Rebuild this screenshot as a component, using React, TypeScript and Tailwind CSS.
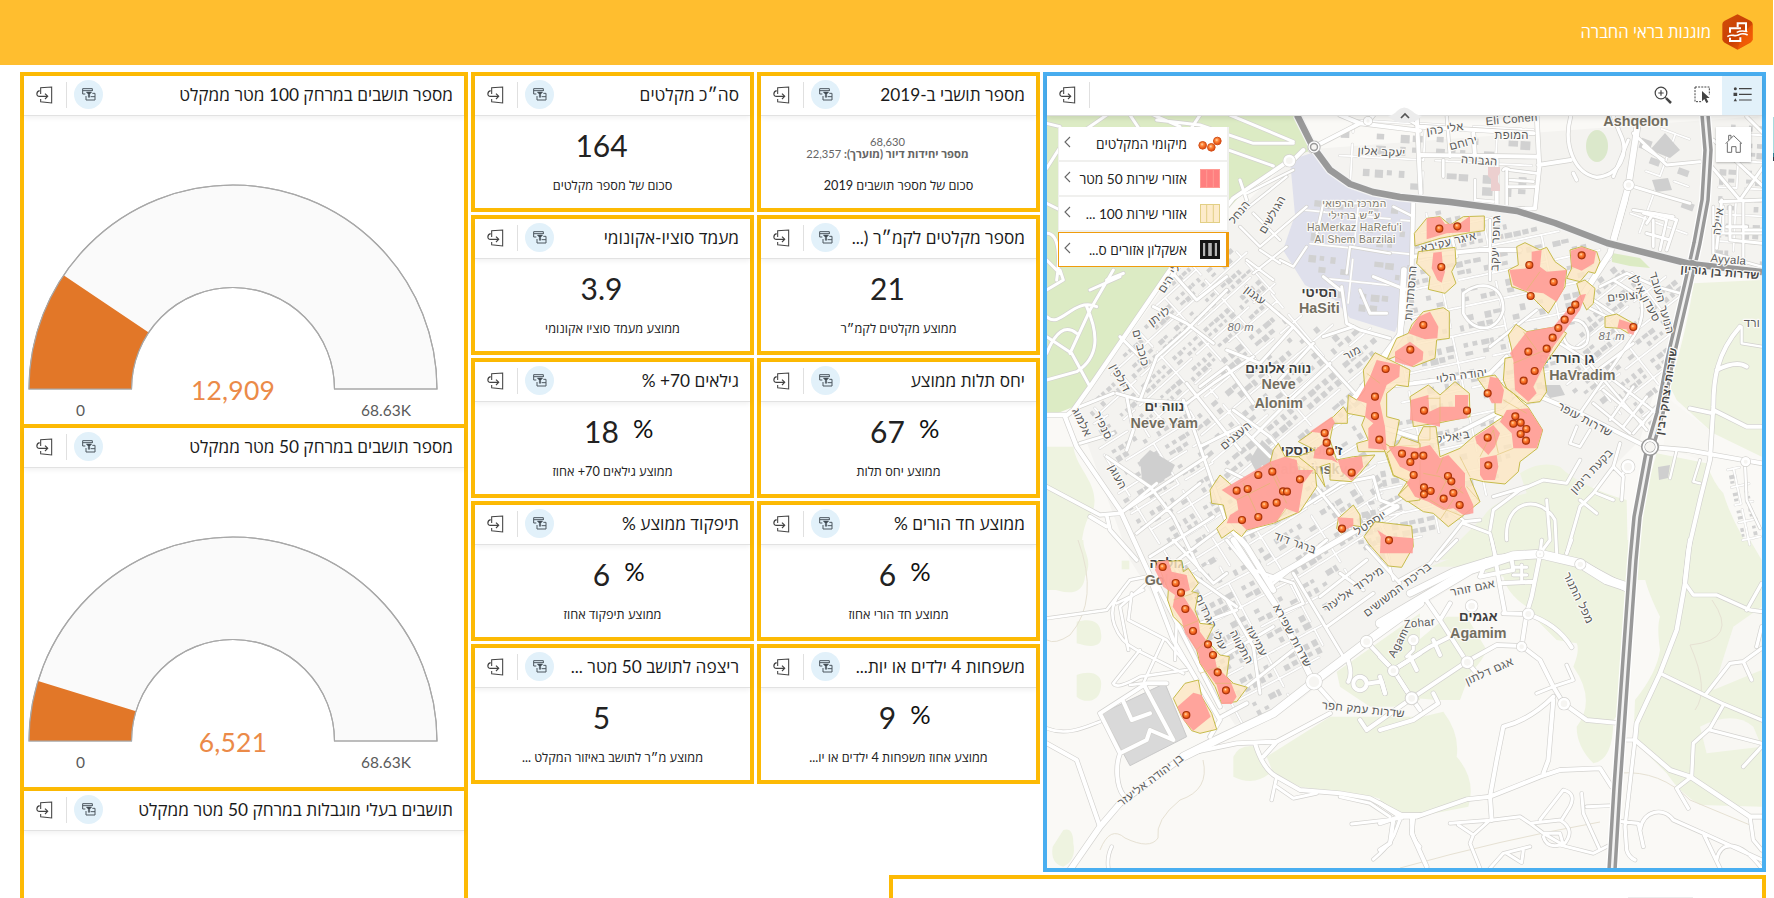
import React from "react";

/* ------------------------------------------------------------------ */
/* Icons                                                               */
/* ------------------------------------------------------------------ */

function ExitIcon() {
  return (
    <svg width="17" height="18" viewBox="0 0 51 54" fill="none" stroke="#444" strokeWidth="3.2" className="shrink-0">
      <path d="M14 24V5l33-2v48l-33-4v-8" />
      <path d="M11 14C0 17 0 31 10 31h24" strokeWidth="3.6" />
      <path d="M27 23l8 8-8 8" strokeWidth="3.6" />
    </svg>
  );
}

function ActionsIcon() {
  return (
    <svg width="14" height="13" viewBox="0 0 42 39" fill="none" stroke="#4c575f" strokeWidth="3" className="shrink-0">
      <path d="M31 9V2H2v16h8M2 8h29" />
      <path d="M12 36h27V16h-8M12 24v12M26 26h13" />
      <path d="M13 12h16l-6 7v9h-4v-9z" fill="#3f4a52" strokeWidth="1.500" />
    </svg>
  );
}

function DashboardLogo() {
  return (
    <svg width="31" height="36" viewBox="0 0 93 108">
      <defs>
        <linearGradient id="logo" x1="0" y1="0" x2="1" y2="1">
          <stop offset="0" stopColor="#d24d08" />
          <stop offset="0.55" stopColor="#c84004" />
          <stop offset="1" stopColor="#ff6a06" />
        </linearGradient>
      </defs>
      <path d="M46.5 1 85 20q7 4 7 10v46q0 6-7 10L46.5 107 8 86q-7-4-7-10V30q0-6 7-10z" fill="url(#logo)" />
      <path d="M46.5 107 92 78V30L60 60z" fill="#fa5f05" opacity=".55" />
      <g fill="none" stroke="#fff" strokeWidth="6">
        <path d="M47 40V28h25v24" />
        <path d="M57 43H24v13" />
        <path d="M24 71v10h31V70" />
        <path d="M16 68c12-10 20 0 30-4s16-8 31-1" strokeWidth="5" />
        <path d="M44 55c8-4 16-6 32-2" strokeWidth="4" />
      </g>
    </svg>
  );
}

function ZoomIcon() {
  return (
    <svg width="18" height="18" viewBox="0 0 54 54" fill="none" stroke="#444">
      <circle cx="21" cy="21" r="17.5" strokeWidth="3.6" />
      <path d="M13 21h16M21 13v16" strokeWidth="3.6" />
      <path d="M34 34l4 4" strokeWidth="4" />
      <path d="M37 37l14 14" strokeWidth="7.5" />
    </svg>
  );
}

function SelectIcon() {
  return (
    <svg width="17" height="18" viewBox="0 0 51 54">
      <path d="M3 3h43v24M3 3v44h20" fill="none" stroke="#444" strokeWidth="3" strokeDasharray="6 3.4" />
      <path d="M24 15v31l7-7 6 12 6-3-6-12h10z" fill="#444" />
    </svg>
  );
}

function ListIcon() {
  return (
    <svg width="19" height="17" viewBox="0 0 57 51">
      <path d="M18 8h38M18 25h38M18 42h38" stroke="#444" strokeWidth="3.6" />
      <circle cx="7" cy="8" r="4.5" fill="#444" />
      <path d="M1.500 20h11v10h-11zM7 37l5 9H2z" fill="#444" />
    </svg>
  );
}

function HomeIcon() {
  return (
    <svg width="18" height="19" viewBox="0 0 54 57" fill="none" stroke="#6e6e6e" strokeWidth="3">
      <path d="M2 29 26 5l25 24M7 26v29h13V38h13v17h13V26M11 19V4h7v8" />
    </svg>
  );
}

/* ------------------------------------------------------------------ */
/* Panels                                                              */
/* ------------------------------------------------------------------ */

function PanelHeader({ title }: { title: string }) {
  return (
    <div className="flex h-[40px] shrink-0 items-center border-b border-[#e2e2e2] pb-0.5 pl-3 pr-[11px] shadow-[0_2px_5px_rgba(0,0,0,0.06)]">
      <ExitIcon />
      <div className="ml-[13px] h-[26px] w-px bg-[#e0e0e0]" />
      <div className="ml-[7px] flex size-[29px] shrink-0 items-center justify-center rounded-full bg-[#e2f1fa]">
        <ActionsIcon />
      </div>
      <h2 dir="rtl" className="min-w-0 flex-1 whitespace-nowrap pt-px text-[17.25px] leading-6 text-[#1a1a1a]">
        {title}
      </h2>
    </div>
  );
}

function Gauge({ value, label }: { value: number; label: string }) {
  const cx = 209;
  const cy = 273;
  const R = 204;
  const r = 101.5;
  const a = Math.PI * (1 - value / 68630);
  const c = Math.cos(a);
  const s = Math.sin(a);
  const ring = `M${cx - R} ${cy}A${R} ${R} 0 0 1 ${cx + R} ${cy}H${cx + r}A${r} ${r} 0 0 0 ${cx - r} ${cy}Z`;
  const arc = `M${cx - R} ${cy}A${R} ${R} 0 0 1 ${cx + R * c} ${cy - R * s}L${cx + r * c} ${cy - r * s}A${r} ${r} 0 0 0 ${cx - r} ${cy}Z`;
  return (
    <svg width="440" height="308" viewBox="0 0 440 308" className="shrink-0">
      <path d={ring} fill="#fafafa" stroke="#a8a8a8" strokeWidth="1.2" />
      <path d={arc} fill="#e27728" />
      <path d={ring} fill="none" stroke="#a8a8a8" strokeWidth="1.1" />
      <text x={cx} y="284" textAnchor="middle" fontSize="26.5" fill="#eb8a48" letterSpacing=".2">{label}</text>
      <text x="56.500" y="300" textAnchor="middle" fontSize="15.500" fill="#5a5a5a">0</text>
      <text x="362" y="300" textAnchor="middle" fontSize="15.500" fill="#5a5a5a">68.63K</text>
    </svg>
  );
}

type Card = { title: string; value: string; unit?: string; label: string; note?: boolean };

const CARDS: Card[] = [
  { title: "סה״כ מקלטים", value: "164", label: "סכום של מספר מקלטים" },
  { title: "מספר תושבי ב-2019", value: "68,630", label: "סכום של מספר תושבים 2019", note: true },
  { title: "מעמד סוציו-אקונומי", value: "3.9", label: "ממוצע מעמד סוציו אקונומי" },
  { title: "מספר מקלטים לקמ״ר (...", value: "21", label: "ממוצע מקלטים לקמ״ר" },
  { title: "גילאים 70+ %", value: "18", unit: "%", label: "ממוצע גילאים 70+ אחוז" },
  { title: "יחס תלות ממוצע", value: "67", unit: "%", label: "ממוצע יחס תלות" },
  { title: "תיפקוד ממוצע %", value: "6", unit: "%", label: "ממוצע תיפקוד אחוז" },
  { title: "ממוצע חד הורים %", value: "6", unit: "%", label: "ממוצע חד הורי אחוז" },
  { title: "ריצפה לתושב 50 מטר ...", value: "5", label: "ממוצע מ״ר לתושב באיזור המקלט ..." },
  { title: "משפחות 4 ילדים או יות...", value: "9", unit: "%", label: "ממוצע אחוז משפחות 4 ילדים או יו..." },
];

function StatCard({ card }: { card: Card }) {
  return (
    <section className="flex flex-col border-4 border-[#fdba04] bg-white">
      <PanelHeader title={card.title} />
      {card.note ? (
        <div className="flex h-[59px] flex-col items-center justify-center pr-[22px] pt-[4px] text-[11.200px] leading-3 text-[#666]">
          <span>68,630</span>
          <span dir="rtl" className="font-bold">
            מספר יחידות דיור (מוערך): <span className="font-normal">22,357</span>
          </span>
        </div>
      ) : (
        <div className="grid h-[59px] grid-cols-[1fr_auto_1fr] items-center pr-[22px] text-[#222]">
          <span />
          <span className="text-[30px] leading-[59px]">{card.value}</span>
          <span className="pb-[7px] pl-[14px] text-[25.500px] leading-[52px] text-[#111]">{card.unit}</span>
        </div>
      )}
      <p dir="rtl" className="text-center text-[12.700px] leading-5 text-[#222]">{card.label}</p>
    </section>
  );
}

/* ------------------------------------------------------------------ */
/* Map                                                                 */
/* ------------------------------------------------------------------ */

type Tile = [number, number];
const NW: Tile = [1040, 60];
const NE: Tile = [1400, 0];
const W: Tile = [1040, 270];
const E: Tile = [1380, 200];
const SW: Tile = [1040, 540];
const SE: Tile = [1380, 540];

const at = ([x, y]: Tile) => `translate(${x} ${y}) scale(.33333)`;

const MEADOWS: [Tile, string][] = [
  [W, "M20 530H100C110 600 180 640 160 720C110 780 130 880 110 960H20Z"],
  [SW, "M20 0H130C130 40 160 60 135 110C130 160 90 170 20 140Z"],
  [SW, "M110 245C150 235 180 240 183 280C190 320 160 325 110 310Z"],
  [SW, "M110 405C150 390 190 400 183 440C180 490 130 490 110 470Z"],
  [SW, "M580 650Q600 610 650 620Q670 670 690 700Q640 740 580 710Z"],
  [SW, "M70 870Q100 860 100 910Q110 960 70 980Q30 970 38 920Z"],
  [SW, "M245 62H268V88H245Z"],
  [SW, "M680 650L870 530H1140V815L1000 770L780 740L700 700Z"],
  [SW, "M890 395L1140 220V480L1060 500L990 500L900 440Z"],
  [SE, "M0 560L190 515Q240 580 230 650Q290 720 265 800L60 840L0 790Z"],
  [SE, "M150 80L350 0H745L735 500L700 540Q700 660 640 670Q590 620 590 560Q650 480 580 380Q600 330 590 310L530 300L470 240L440 200Q380 160 370 110L260 80Z"],
  [SE, "M20 380L200 230L260 230L320 330Q310 360 270 400L240 480H170L60 470Z"],
  [SE, "M790 0H1110L1145 60V800L960 795Q900 760 860 700L760 600L765 480Q830 400 840 330Q830 260 840 230Q790 130 790 80Z"],
  [E, "M940 250L1145 240V770L1000 700L890 600L870 560Q930 350 940 250Z"],
  [E, "M830 760L980 790Q1000 850 1030 880Q1060 980 1145 1100V1140H770L790 900Z"],
  [E, "M420 820Q480 780 540 800Q600 860 740 900L745 1140L480 1060L180 1080L310 950Q340 900 440 880Z"],
];

const BARE: [Tile, string][] = [
  [SE, "M960 560Q1060 510 1120 560L1145 620L980 640Z"],
  [E, "M870 600L1000 700L990 790L850 740Z"],
  [SE, "M1060 260L1145 200V390L1000 450Z"],
];

const ROADS: [Tile, number, string][] = [
  [NW, 12, "M750 300L580 415L400 640L380 680M820 262L960 190L1140 212M980 190L1000 165M960 190L900 165M760 300L790 270"],
  [NW, 9, "M570 165L760 245M350 180L480 195L640 250L760 250M340 165L420 200M200 165L60 262L20 325M20 190L60 200M570 272L700 318M60 640L20 600M20 520C60 520 60 600 50 660M270 165L300 210M450 210L480 165M250 640L200 660M20 430L60 450M620 420L600 360"],
  [NW, 7, "M600 500L660 560L800 440M640 460L720 540M590 470L740 350M620 400L760 330M740 560L640 640M620 600L700 660M720 610L660 570M830 520L850 430H960M1060 440L1120 470M800 560L760 620L720 600M920 640L930 560L1050 580"],
  [NE, 12, "M50 345L62 580M62 465L415 470M410 345L418 500L405 625M415 495L512 480M62 380L400 400M220 400L225 470M290 480V630L405 625"],
  [NE, 8, "M225 540V600L280 605M310 510Q315 500 330 510L410 520M130 480V530M320 560H410M320 510V620M330 540L400 545M140 345L150 470M0 345L60 380"],
  [NE, 10, "M512 350C490 430 520 520 590 532C660 525 690 460 660 400L640 350M530 540L520 520"],
  [NE, 18, "M712 380L685 560L640 720"],
  [NE, 9, "M685 555L800 590L870 610M700 400L800 495L900 485M730 440L790 480M740 670L760 640L830 660L800 750M740 700L810 720M685 420L640 530"],
  [NE, 9, "M940 420L1090 560M960 605L1085 600M965 600L950 745M990 620V720L1085 730M1020 600L1090 500M1030 690H1085M1040 350L1090 400M935 500L1020 600M980 680H1040"],
  [W, 13, "M390 0L150 350L100 420L75 440L110 530L240 720L350 960M20 435H80"],
  [W, 9, "M20 200L95 250L150 350M90 250L150 120L220 0M20 60L70 30L60 0M140 110C175 190 180 260 110 305L20 330M20 140C60 180 100 80 170 110M150 60L240 20M20 250Q60 150 110 190"],
  [W, 11, "M20 650L180 735L240 730M200 735L210 780L290 870M150 740L200 770"],
  [W, 9, "M620 50L760 170L1000 430M560 60L440 180L350 260L300 390L230 370M300 390L440 400L520 340L640 260M440 340L600 540M440 160L520 220M480 350L560 290L640 400M580 420L690 500L740 560M430 390L480 530L560 760M350 640L240 730L500 560M290 790L480 640M330 860L520 740M390 0L470 90L560 20M340 110L440 160M240 200L300 260M220 370L120 410M260 380L280 480L260 540M120 520L220 490M200 560L330 650L400 740L480 900M480 530L600 470L690 560M760 170L660 280L560 240M820 220L700 350M870 280L740 400L640 500M850 200L940 170M560 760L400 880L440 960M640 640L560 600M600 800L760 730L900 640L1000 620M820 640L900 740"],
  [W, 17, "M560 760L620 830L700 960M1070 710L760 890L690 930M1092 0L1080 200L940 390"],
  [W, 9, "M905 50L920 160L960 180L1050 205M960 60L990 130H1040M1000 20L1100 60M850 20L900 60M1000 620L1020 690L1070 710"],
  [E, 17, "M735 0L690 160L560 360L450 560L350 660"],
  [E, 12, "M100 0L95 210L60 400L0 480M100 170L300 150L420 150M0 560L100 550L330 520L380 470M0 680L130 720L180 725L340 645L480 590L600 640L800 740"],
  [E, 8, "M330 60V240M210 90L230 170M250 280C300 240 370 250 370 330C350 400 280 400 250 340ZM330 440L470 330M560 370C590 340 640 380 620 430C590 460 550 440 550 400M640 300L700 340M660 260L740 220L830 260L900 280M700 240L780 290Q800 350 760 410L600 640M620 320L680 350M540 430L620 480L800 690M640 520L760 430M760 560L690 660M800 590L730 680M830 620L760 700M700 540L830 640M670 570L790 670M640 610L750 700M590 680L570 730L600 740L630 690M820 60V140M790 40L860 60L840 150M760 30L880 50"],
  [E, 9, "M600 780L560 850L490 840L420 870L340 930L330 990M380 1020C370 900 480 880 525 960L530 1060M340 890L440 860M300 960L250 965L150 1090L60 1140M250 970L330 1000L350 1080M480 1060L510 1020L500 900M720 730L700 800L640 880L600 920L560 1060M650 880L700 900M600 900L650 940M700 800L730 830L725 900M730 820L740 790"],
  [E, 20, "M90 1180L220 1115L350 1075L480 1062L600 1090L740 1165"],
  [E, 12, "M800 740L920 750L1145 790M1080 380C1010 460 1000 540 1000 620L990 780L960 900L925 1050L915 1140M1010 510Q1070 480 1100 500M1000 630L1100 680H1145M930 625L1000 640"],
  [E, 7, "M890 750L870 835M960 780L940 845L960 850M1000 20V160L1145 200M1000 100H1145M1030 20V100M1090 0V180M1095 790L1100 900L1140 985M1085 380V430L1145 440M0 930L110 870L250 960M0 1000L40 1140"],
  [SW, 8, "M20 235L200 210L270 120L320 110M240 160C190 220 230 300 290 330L430 400M275 160L265 240L380 300L440 375M310 150L230 190M300 330L220 430Q230 450 300 410L440 390M370 300L310 430L270 435M20 565C80 590 140 560 180 545M410 250L405 360M320 130L240 200L265 330"],
  [SW, 12, "M335 130L400 300L540 540L510 590M350 130L540 500M545 530L620 490"],
  [SW, 12, "M20 610L110 660L178 855M240 640C225 680 230 740 250 765M240 640L320 600L330 570L400 600M180 520L320 430L380 430M180 520L240 640M315 440L400 600M250 485L275 540L330 520"],
  [SW, 24, "M430 650L530 600L700 520L822 425L980 305L1140 190"],
  [SW, 17, "M90 990L180 860L240 790L430 650M580 0L710 200L820 425"],
  [SW, 9, "M760 100L910 350M640 90L760 130L790 190L720 220M700 260L480 390M620 440L760 330M560 180L640 320L660 460M590 210L480 250M450 100L590 200M700 130L860 0M840 170L980 60M900 100L970 150M980 20L1080 130M400 0L520 130L560 100M640 100L560 0M860 260L1000 160"],
  [SW, 12, "M470 635L590 610L710 605L870 520M645 610Q670 690 710 710L780 750L900 760L990 775L1085 825H1140M710 605L670 650M822 425L880 490M920 350Q940 400 925 425M980 305L1060 390L1115 475L980 570L960 540M1060 390L1140 340M1025 425L1035 460M980 430A20 20 0 1 0 980 431L1020 425"],
  [SW, 9, "M710 710L695 780M710 740L760 775L830 760M1085 830C1060 870 1080 890 1000 958M935 852L1085 835M1115 830Q1110 890 1140 920M215 920Q200 950 205 985M900 770L990 790L1050 830"],
  [SE, 26, "M0 250L135 170L270 90L400 47L480 42L600 70L680 120L740 140"],
  [SE, 12, "M135 175L180 240L260 365L290 400M40 390L150 320L230 280M95 475L260 365L350 315L425 318L480 360L520 440L550 490L620 540L705 548M0 570L100 540L175 490L160 460M345 50L360 140L375 220M480 45L455 170L440 220L425 318M370 220L440 222Q530 250 575 322M180 240L210 190M360 130L460 125M0 350L40 390L95 475L120 510M320 60L300 110L400 90L395 60M0 410L15 460M90 350L110 390M160 300L180 345"],
  [SE, 9, "M425 75V125M400 82H440M400 105H440M520 440L580 420L560 375M520 440L470 460M345 50L335 0M480 42L485 0M560 40L575 0M170 60L230 0M100 300V330L80 350"],
  [SE, 12, "M520 470Q450 540 370 560L350 660L330 770L335 840M520 480L505 660L490 700M0 790L60 830L110 830L260 778L330 770L480 710L540 690L660 685L695 740M100 830L95 880L140 980M60 830L0 850M40 840L30 910L0 930"],
  [SE, 9, "M210 850L340 840L420 830L450 850L540 840Q590 870 550 915L490 880L450 850M235 855L280 885L330 840M280 885L270 910L300 985M480 840L550 750Q590 760 570 800L545 840M605 760L610 820L660 930M620 800L690 797M490 890Q500 925 540 915L640 940L690 915M330 985L370 940L450 920M380 940L425 968L430 930M490 880L540 880L550 915"],
  [SE, 13, "M930 0L915 130L890 270L840 400L770 550L765 600L870 690L930 710L1110 830H1145"],
  [SE, 10, "M915 130L940 165L1010 165L1110 210L1145 215M840 400L1025 490L1145 540M980 460L1050 370L1090 365L1145 325M1090 365L1115 420M1030 495L990 565L940 610L935 710L890 745L925 805M990 570L1145 610M765 600L735 860L740 930Q745 950 765 960M725 845L775 850L790 920M780 870C790 810 850 800 880 840L970 880L1145 960M970 880L1020 985M1010 960C1020 900 1080 900 1145 985M1110 830L1120 900L1145 930M1145 620L1090 680M740 600H765M1130 320L1145 260M1100 210L1145 130"],
];

const LOOPS: [Tile, number, number, number][] = [
  [NW, 822, 262, 15], [NW, 748, 302, 14], [NW, 984, 183, 9], [E, 811, 741, 21], [SW, 822, 425, 20], [SW, 980, 305, 14], [SW, 1060, 392, 12],
  [SW, 1115, 475, 15], [SE, 262, 367, 14], [SE, 95, 475, 14], [SE, 40, 392, 12], [SE, 445, 222, 13], [SE, 425, 320, 11], [SE, 552, 491, 14],
  [SE, 601, 73, 12], [E, 744, 800, 16], [SE, 275, 198, 14], [NE, 686, 555, 12], [SE, 480, 42, 7], [E, 1097, 785, 10], [SE, 100, 300, 12],
];

type Block = { poly: [number, number][]; angle: number; step: number; fill: number };
const BLOCKS: Block[] = [
  { poly: [[1170, 282], [1215, 228], [1235, 250], [1275, 290], [1225, 345], [1190, 400], [1150, 425], [1085, 412]], angle: -42, step: 7, fill: 0.85 },
  { poly: [[1240, 255], [1300, 325], [1385, 335], [1350, 420], [1300, 440], [1240, 500], [1200, 460], [1190, 400], [1225, 345], [1275, 290]], angle: -40, step: 9, fill: 0.72 },
  { poly: [[1150, 425], [1190, 405], [1200, 460], [1240, 500], [1220, 520], [1235, 560], [1170, 570], [1120, 500], [1085, 415]], angle: -32, step: 8, fill: 0.7 },
  { poly: [[1300, 440], [1350, 420], [1400, 520], [1325, 590], [1240, 560], [1225, 520]], angle: -32, step: 9, fill: 0.75 },
  { poly: [[1165, 560], [1240, 560], [1325, 590], [1318, 650], [1300, 690], [1235, 725], [1195, 640]], angle: -28, step: 9, fill: 0.75 },
  { poly: [[1318, 120], [1530, 120], [1525, 200], [1400, 188], [1345, 172]], angle: 3, step: 12, fill: 0.5 },
  { poly: [[1415, 208], [1560, 232], [1600, 255], [1525, 420], [1480, 500], [1380, 560], [1350, 540], [1400, 400]], angle: -12, step: 9, fill: 0.6 },
  { poly: [[1600, 260], [1680, 285], [1655, 430], [1560, 385]], angle: -38, step: 8, fill: 0.72 },
  { poly: [[1715, 120], [1760, 120], [1760, 262], [1712, 250]], angle: 3, step: 9, fill: 0.65 },
  { poly: [[1640, 125], [1690, 130], [1680, 235], [1630, 215]], angle: 20, step: 15, fill: 0.4 },
  { poly: [[1295, 200], [1330, 190], [1410, 205], [1408, 300], [1370, 315], [1310, 280]], angle: 6, step: 11, fill: 0.6 },
  { poly: [[1726, 465], [1738, 465], [1758, 540], [1742, 545]], angle: -12, step: 6, fill: 0.9 },
];

function inside(x: number, y: number, poly: [number, number][]) {
  let hit = false;
  for (let i = 0, j = poly.length - 1; i < poly.length; j = i++) {
    const [xi, yi] = poly[i];
    const [xj, yj] = poly[j];
    if (yi > y !== yj > y && x < ((xj - xi) * (y - yi)) / (yj - yi) + xi) hit = !hit;
  }
  return hit;
}

function layOutBlock({ poly, angle, step, fill }: Block) {
  let seed = 7;
  const rnd = () => (seed = (seed * 16807) % 2147483647) / 2147483647;
  const rad = (angle * Math.PI) / 180;
  const cos = Math.cos(rad);
  const sin = Math.sin(rad);
  const cx = poly.reduce((t, p) => t + p[0], 0) / poly.length;
  const cy = poly.reduce((t, p) => t + p[1], 0) / poly.length;
  let houses = "";
  let lanes = "";
  for (let i = -30; i < 30; i++) {
    for (let j = -30; j < 30; j++) {
      const keep = rnd() < fill;
      const w = step * (0.4 + rnd() * 0.5);
      const h = step * (0.4 + rnd() * 0.35);
      const u = i * step;
      const v = j * step;
      const x = cx + u * cos - v * sin;
      const y = cy + u * sin + v * cos;
      if (!inside(x, y, poly)) continue;
      const across = i % 6 === 0;
      const along = j % 3 === 0;
      if (along && (i + j) % 11 !== 0) lanes += `M${x.toFixed(1)} ${y.toFixed(1)}l${(step * cos).toFixed(1)} ${(step * sin).toFixed(1)}`;
      if (across && (i * 2 + j) % 7 !== 0) lanes += `M${x.toFixed(1)} ${y.toFixed(1)}l${(-step * sin).toFixed(1)} ${(step * cos).toFixed(1)}`;
      if (across || along || !keep) continue;
      houses += `M${x.toFixed(1)} ${y.toFixed(1)}l${(w * cos).toFixed(1)} ${(w * sin).toFixed(1)}l${(-h * sin).toFixed(1)} ${(h * cos).toFixed(1)}l${(-w * cos).toFixed(1)} ${(-w * sin).toFixed(1)}z`;
    }
  }
  return { houses, lanes };
}
const BLOCK_PATHS = BLOCKS.map(layOutBlock);

const RANGE_100: [Tile, string][] = [
  [E, "140,55 180,50 210,75 250,50 313,48 313,92 270,98 180,115 105,138 103,100"],
  [E, "115,155 225,142 228,190 215,215 228,250 195,280 145,268 150,230 110,190"],
  [E, "410,140 435,128 480,150 500,142 525,185 560,210 555,260 505,340 440,275 395,260 385,210 415,195"],
  [E, "570,150 605,140 650,155 660,185 645,220 625,215 600,245 560,235 575,205"],
  [E, "590,250 615,240 645,265 640,310 620,330 605,300"],
  [E, "385,405 408,373 440,395 530,380 560,400 490,500 500,575 480,605 440,610 380,565 370,540 375,475 400,470"],
  [E, "675,350 710,342 760,370 745,400 720,385 675,382"],
  [E, "95,375 130,335 190,323 208,335 208,415 170,420 165,475 100,500 45,470 20,480 50,415 85,400"],
  [W, "1005,248 1050,270 1110,300 1105,350 1070,345 1040,370 1040,440 1078,450 1060,545 955,545 950,520 985,510 965,465 975,440 922,430 925,375 950,390 975,360 970,300"],
  [E, "90,590 145,555 180,585 225,545 268,580 270,650 180,668 100,680"],
  [E, "292,535 345,525 372,560 400,580 420,600 445,622 488,690 472,745 420,785 415,815 375,852 310,845 270,835 300,905 245,950 205,980 160,940 130,935 55,885 85,840 40,828 15,755 0,720 30,740 115,735 115,710 130,680 168,680 180,770 240,745 280,710 370,650 345,640 345,610"],
  [W, "775,515 880,440 910,410 922,430 922,460 880,460 870,510 890,570 940,560 1005,555 960,610 935,635 870,630 870,580 840,590 855,650 830,610 780,590 760,565 825,540"],
  [W, "510,660 540,615 580,650 690,580 700,540 715,520 735,560 775,560 825,600 830,650 780,725 700,760 620,780 605,800 580,780 545,805 530,775 560,745 550,705 515,700"],
  [W, "895,745 940,705 960,735 962,770 930,765 905,790 890,775"],
  [W, "1005,755 1115,768 1120,830 1085,892 1045,888 985,820 972,800"],
  [W, "1040,550 1075,520 1085,500 1140,520 1140,690 1100,695 1075,675 1110,640 1060,615"],
  [SW, "350,65 425,62 430,95 445,85 475,130 455,155 475,160 465,210 480,250 522,255 500,300 540,345 568,350 560,410 580,430 622,442 590,485 545,490 525,440 480,370 470,330 430,260 400,230 383,180 385,150"],
  [SW, "400,475 435,430 475,420 485,470 515,520 530,568 480,580 455,572 425,530"],
];

const RANGE_50: [Tile, string][] = [
  [E, "140,55 180,50 195,72 240,70 270,48 270,95 200,100 140,118"],
  [E, "160,158 185,155 188,190 195,215 185,248 172,240 155,205"],
  [E, "455,155 485,150 480,200 500,215 560,210 550,270 530,305 490,280 450,275 430,270 400,255 388,210 440,205 455,190"],
  [E, "572,152 605,141 648,155 642,190 605,212 575,200"],
  [E, "440,395 520,380 600,285 618,282 600,330 520,440 490,500 460,560 470,580 445,605 405,570 400,480 390,460"],
  [E, "718,358 770,375 760,405 745,400 740,388 712,385"],
  [E, "85,400 115,350 150,335 175,380 172,415 135,418"],
  [E, "45,455 90,425 130,455 128,480 95,500 45,485"],
  [E, "92,600 145,585 148,635 180,620 225,620 225,585 265,585 262,655 180,665 180,680 90,660"],
  [E, "330,530 355,535 372,570 365,610 335,610 320,580"],
  [E, "380,630 445,625 488,690 470,745 400,745 395,700 360,665"],
  [E, "285,710 340,675 360,700 345,740 325,765 290,730"],
  [E, "300,775 350,765 355,800 345,840 310,840 300,825"],
  [E, "25,740 60,738 110,745 150,735 180,775 205,765 255,820 255,860 280,915 280,940 250,945 220,925 190,930 145,905 105,890 80,850 100,820 60,800"],
  [W, "1010,270 1080,285 1078,320 1040,345 1020,400 1035,470 1040,540 985,535 985,475 1000,460 975,440 980,400 950,390 990,320"],
  [W, "810,485 875,440 885,458 865,490 865,540 895,580 875,570 820,565 825,540 850,520 850,490"],
  [W, "893,570 965,558 970,590 935,632 905,605"],
  [W, "545,660 690,575 735,560 770,570 775,600 820,600 790,640 775,730 735,715 710,755 640,775 620,780 600,760 560,760 570,735 595,720 590,690"],
  [W, "892,742 940,745 940,768 905,785"],
  [W, "1012,780 1040,798 1120,805 1118,850 1020,850 1022,800"],
  [SW, "352,65 385,60 395,95 440,105 450,150 425,160 460,215 475,240 480,275 520,330 530,380 570,420 590,470 575,492 545,492 530,435 480,370 475,340 435,280 425,240 398,200 405,165 370,140 345,90"],
  [SW, "412,500 460,458 485,465 512,530 460,572 430,540"],
];

const SEAMS: [Tile, string][] = [
  [E, "M440 270L480 215M400 490L520 440M430 395L470 450M180 590V670M170 820L190 770M130 820L180 830L250 880M205 830L170 900M300 770L340 690L355 760M350 765L400 745M270 830L240 770M370 600L440 640M150 680V720H115M140 595H180M250 950L200 930L150 900M260 860L300 905M245 860L180 960"],
  [W, "M610 640L660 750M690 600L740 700M590 690L690 640M980 310L1020 340M690 580L720 640M705 760L740 715"],
  [SW, "M400 180L460 160M430 260L480 240M470 330L500 300M480 400L540 380M525 430L580 430"],
];

const SHELTERS: [Tile, [number, number][]][] = [
  [E, [[178, 86], [232, 79], [184, 201], [448, 195], [605, 166], [521, 246], [452, 288], [586, 314], [573, 332], [554, 359], [535, 384], [518, 413], [500, 446], [445, 455], [464, 513], [431, 542], [760, 381], [130, 375], [91, 449], [17, 507], [323, 580], [132, 632], [261, 632], [406, 649], [400, 671], [422, 668], [439, 687], [422, 702], [438, 722], [323, 713], [325, 796], [66, 761], [104, 767], [130, 767], [91, 786], [101, 825], [204, 828], [214, 844], [132, 862], [152, 873], [132, 883], [191, 896], [220, 879], [239, 915], [27, 1021]]],
  [W, [[1005, 380], [1005, 438], [1018, 509], [854, 489], [860, 518], [870, 545], [935, 608], [697, 605], [655, 615], [780, 628], [590, 662], [623, 657], [729, 664], [741, 665], [674, 705], [710, 698], [655, 741], [606, 750], [906, 776]]],
  [SW, [[368, 81], [407, 129], [423, 158], [436, 207], [459, 273], [504, 313], [519, 345], [533, 397], [558, 451], [439, 525]]],
];

type LabelKind = "street" | "highway" | "area" | "place" | "site" | "height";
const LABEL_CLASS: Record<LabelKind, string> = {
  street: "fill-[#5a5a5a] text-[34px] tracking-[1px]",
  highway: "fill-[#444] text-[33px] font-bold tracking-[1px]",
  area: "fill-[#3f3f3f] text-[40px] font-bold",
  place: "fill-[#736e60] text-[43px] font-bold",
  site: "fill-[#807b6e] text-[31px] tracking-[1px]",
  height: "fill-[#777] text-[34px] italic tracking-[1px]",
};

const LABELS: [Tile, LabelKind, number, number, number, string][] = [
  [NW, "street", 1025, 287, 3, "יעקב אלון"],
  [NW, "street", 697, 475, -60, "הגולשים"],
  [NW, "street", 598, 468, -50, "הנחל"],
  [NW, "site", 943, 442, 0, "המרכז הרפואי"],
  [NW, "site", 943, 476, 0, "ע״ש ברזילי"],
  [NW, "site", 943, 513, 0, "HaMerkaz HaRefu'i"],
  [NW, "site", 945, 550, 0, "Al Shem Barzilai"],
  [NE, "street", 135, 398, -8, "אלי כהן"],
  [NE, "street", 335, 369, -5, "Eli Cohen"],
  [NE, "street", 335, 418, 0, "המופת"],
  [NE, "street", 190, 440, -15, "ירוחם"],
  [NE, "street", 238, 493, 4, "הגבורה"],
  [NE, "place", 708, 379, 0, "Ashqelon"],
  [NE, "street", 955, 675, -83, "איילה"],
  [E, "street", 205, 138, -14, "איגר עקיבא"],
  [E, "street", 347, 140, -88, "גרופר יעקב"],
  [E, "street", 92, 290, -85, "ההסתדרות"],
  [E, "street", 245, 538, -8, "יהודה הלוי"],
  [E, "street", 218, 722, -10, "ביאליק"],
  [E, "street", 735, 300, -6, "הצופים"],
  [E, "street", 795, 305, 62, "סעדון אילן"],
  [E, "street", 845, 320, 74, "הנוער העובד"],
  [E, "highway", 1020, 228, 5, "שדרות בן גוריון"],
  [E, "highway", 860, 585, -81, "שדרות יצחק רבין"],
  [E, "street", 1045, 190, 5, "Ayyala"],
  [E, "height", 695, 420, 0, "81 m"],
  [E, "area", 560, 490, 0, "גן הורדים"],
  [E, "place", 607, 539, 0, "HaVradim"],
  [E, "street", 615, 670, 28, "שדרות עופר"],
  [E, "street", 635, 825, -47, "בקעת רימון"],
  [E, "street", 1116, 382, 0, "ורד"],
  [W, "area", 838, 80, 0, "הסיטי"],
  [W, "place", 838, 130, 0, "HaSiti"],
  [W, "height", 602, 184, 0, "80 m"],
  [W, "area", 715, 308, 0, "נווה אלונים"],
  [W, "place", 716, 358, 0, "Neve"],
  [W, "place", 716, 414, 0, "Alonim"],
  [W, "area", 373, 424, 0, "נווה ים"],
  [W, "place", 373, 474, 0, "Neve Yam"],
  [W, "area", 815, 556, 0, "ז'בוטינסקי"],
  [W, "place", 810, 611, 0, "Jabutinsky"],
  [W, "area", 380, 894, 0, "גולדה"],
  [W, "place", 375, 944, 0, "Golda"],
  [W, "street", 645, 88, 38, "עגנון"],
  [W, "street", 392, 30, -58, "גלי הים"],
  [W, "street", 358, 150, -36, "לויתן"],
  [W, "street", 302, 245, 75, "כוכב ים"],
  [W, "street", 240, 335, 62, "דולפין"],
  [W, "street", 188, 478, 64, "סנפיר"],
  [W, "street", 125, 468, 64, "אלמוג"],
  [W, "street", 232, 632, 62, "העוגן"],
  [W, "street", 588, 508, -40, "העצנים"],
  [W, "street", 937, 260, -28, "מור"],
  [W, "street", 765, 830, 20, "ברגר דוד"],
  [W, "street", 992, 770, -32, "יוספטל"],
  [SW, "street", 940, 160, -35, "מילרוד אליעזר"],
  [SW, "street", 1072, 160, -37, "בריכת המשושים"],
  [SW, "street", 757, 298, 62, "שדרות שפירא"],
  [SW, "street", 650, 315, 62, "עמיעוז"],
  [SW, "street", 604, 332, 62, "התקווה"],
  [SW, "street", 512, 258, 64, "עולי הגרדום"],
  [SW, "street", 970, 520, 6, "שדרות עמק חפר"],
  [SW, "street", 332, 732, -37, "בן יהודה אליעזר"],
  [SE, "street", 278, 155, -12, "אגם זוהר"],
  [SE, "area", 295, 243, 0, "אגמים"],
  [SE, "place", 295, 295, 0, "Agamim"],
  [SE, "street", 328, 405, -24, "אגם דלתון"],
  [SE, "street", 595, 185, 64, "מפל התנור"],
  [SE, "street", 118, 260, -6, "Zohar"],
  [SE, "street", 55, 320, -63, "Agam"],
];

const RING_ROAD = "M1297 115L1313 147L1330 170L1350 184L1373 192L1400 197L1450 202L1517 211L1555 223L1607 243L1690 264L1762 272";
const EAST_ROAD = "M1705 115L1708 150L1705 200L1697 243L1688 283L1670 360L1660 413L1650 447L1637 517L1633 560L1625 673L1617 787L1612 870";

function ShelterMap() {
  return (
    <svg width="715" height="752" viewBox="1047 116 715 752" className="block">
      <defs>
        <radialGradient id="pin" cx=".42" cy=".38" r=".6">
          <stop offset="0" stopColor="#ffd9b8" />
          <stop offset=".35" stopColor="#ff8a3c" />
          <stop offset="1" stopColor="#e2450c" />
        </radialGradient>
      </defs>
      <rect x="1047" y="116" width="715" height="752" fill="#faf9f6" />
      <path d="M1175 272L1300 150L1762 116V280L1690 270L1640 440L1560 520L1400 620L1300 700L1235 725L1130 560L1075 410Z" fill="#f4f3f0" />
      {MEADOWS.map(([t, d], i) => <path key={i} transform={at(t)} d={d} fill="#eef3e0" />)}
      {BARE.map(([t, d], i) => <path key={i} transform={at(t)} d={d} fill="#f8f7f3" />)}
      <path d="M1047 115H1293L1312 150L1290 158L1240 196L1172 270L1090 387L1073 407L1053 415L1047 414Z" fill="#dcebc4" />
      <path d="M1612 253L1640 258L1650 268L1630 266L1612 262Z" fill="#dcebc4" />
      <path d="M1290 160L1315 152L1345 185L1380 197L1412 200L1411 290L1395 332L1350 318L1335 300L1305 285L1283 250L1295 215Z" fill="#dfe0ec" />
      <g fill="none" stroke="#e6e1d3" strokeWidth="1">
        <path d="M1078 540Q1100 600 1070 635Q1055 645 1047 640M1203 760Q1210 790 1180 800Q1155 820 1158 838Q1150 850 1125 838Q1110 825 1100 850M1712 600Q1740 640 1690 645Q1710 690 1695 710M1620 773Q1660 770 1690 800L1750 825M1400 868Q1500 840 1600 822" />
      </g>
      <path transform={at(SW)} d="M185 520L375 430L440 590L270 677Z" fill="#d9d9d9" stroke="#c9c9c9" strokeWidth="3" />
      <g strokeLinecap="round">
        {BLOCK_PATHS.map(({ lanes }, i) => <path key={i} d={lanes} stroke="#dbdad8" strokeWidth="2.800" />)}
        {BLOCK_PATHS.map(({ lanes }, i) => <path key={i} d={lanes} stroke="#fff" strokeWidth="1.800" />)}
      </g>
      {BLOCK_PATHS.map(({ houses }, i) => <path key={i} d={houses} fill="#d1d1d1" />)}
      <path d="M1250 460L1262 440L1278 455L1272 470L1262 465L1258 475Z M1140 460L1150 450L1175 465L1170 475L1150 490L1142 480Z M1540 385L1560 385L1565 395L1550 398Z M1658 467L1670 465L1668 478L1659 480Z M1650 150L1665 133L1680 150L1670 158Z M1652 180L1668 178L1672 190L1656 192Z" fill="#cfcfcf" />
      <g fill="none" strokeLinejoin="round" strokeLinecap="round">
        {ROADS.map(([t, w, d], i) => <path key={i} transform={at(t)} d={d} stroke="#d3d2cf" strokeWidth={w + 4} />)}
        {ROADS.map(([t, w, d], i) => <path key={i} transform={at(t)} d={d} stroke="#fff" strokeWidth={w} />)}
        {LOOPS.map(([t, x, y, r], i) => (
          <g key={i} transform={at(t)}>
            <circle cx={x} cy={y} r={r} stroke="#d3d2cf" strokeWidth="12" />
            <circle cx={x} cy={y} r={r} fill="#f6f5f2" stroke="#fff" strokeWidth="8" />
          </g>
        ))}
      </g>
      <ellipse cx="1597" cy="146" rx="11" ry="16" fill="#dbe8cb" />
      <path d="M1488 167h12v6l-2 3v6l2 3v6h-9v-12l-3-3z" fill="#eccfcf" />
      <g fill="none" strokeLinejoin="round">
        <path d={EAST_ROAD} stroke="#fff" strokeWidth="12" />
        <path d={EAST_ROAD} stroke="#999" strokeWidth="9.500" />
        <path d={EAST_ROAD} stroke="#f3f3f3" strokeWidth="2.500" />
        <path d={RING_ROAD} stroke="#f4f4f4" strokeWidth="9" />
        <path d={RING_ROAD} stroke="#999" strokeWidth="6.500" />
        <circle cx="1314" cy="147" r="4.500" fill="#f6f5f2" stroke="#999" strokeWidth="3.500" />
        <circle cx="1314" cy="147" r="5" stroke="#fff" strokeWidth="1.600" />
        <circle cx="1650" cy="447" r="7" fill="#f6f5f2" stroke="#999" strokeWidth="4" />
        <circle cx="1650" cy="447" r="6.500" stroke="#fff" strokeWidth="2" />
        <circle cx="1692" cy="265" r="5" fill="#999" />
      </g>
      <g className="[font-family:'Liberation_Sans','Open_Sans',sans-serif]" textAnchor="middle">
        {LABELS.map(([t, kind, x, y, rot, text], i) => (
          <g key={i} transform={at(t)}>
            <text
              className={LABEL_CLASS[kind]}
              transform={`rotate(${rot} ${x} ${y - 11})`}
              x={x}
              y={y}
              stroke="#fbfaf8"
              strokeWidth="7"
              strokeLinejoin="round"
              paintOrder="stroke"
            >
              {text}
            </text>
          </g>
        ))}
      </g>
      {RANGE_100.map(([t, p], i) => (
        <polygon key={i} transform={at(t)} points={p} fill="#fde7c2" fillOpacity=".82" stroke="#c6bb4a" strokeWidth="3" />
      ))}
      {RANGE_50.map(([t, p], i) => (
        <polygon key={i} transform={at(t)} points={p} fill="#ff9c97" fillOpacity=".9" />
      ))}
      {SEAMS.map(([t, d], i) => <path key={i} transform={at(t)} d={d} fill="none" stroke="#d9bd66" strokeWidth="2" opacity=".8" />)}
      {SHELTERS.map(([t, pts], i) => (
        <g key={i} transform={at(t)}>
          {pts.map(([x, y], j) => <circle key={j} cx={x} cy={y} r="10.500" fill="url(#pin)" stroke="#a8340a" strokeWidth="3.500" />)}
        </g>
      ))}
    </svg>
  );
}

/* ------------------------------------------------------------------ */
/* Legend                                                              */
/* ------------------------------------------------------------------ */

function Pins() {
  return (
    <svg width="24" height="16" viewBox="0 0 72 48">
      {[[14, 28], [40, 34], [58, 15]].map(([x, y]) => (
        <circle key={x} cx={x} cy={y} r="11.500" fill="url(#pin)" stroke="#d0501a" strokeWidth="3" />
      ))}
    </svg>
  );
}

function Swatch({ fill, stroke, w }: { fill: string; stroke: string; w: number }) {
  return (
    <svg width="22" height="21" viewBox="0 0 22 21">
      <rect x={1 + w / 2} y={1 + w / 2} width={20 - w} height={19 - w} fill={fill} stroke={stroke} strokeWidth={w} />
      <path d="M7.700 1v19M14.300 1v19" stroke={stroke} strokeWidth={w} />
    </svg>
  );
}

const LEGEND = [
  { label: "מיקומי המקלטים", icon: <Pins /> },
  { label: "אזורי שירות 50 מטר", icon: <Swatch fill="#ff7f7f" stroke="#ff9b94" w={1} /> },
  { label: "אזורי שירות 100 ...", icon: <Swatch fill="#fdebca" stroke="#e2cf85" w={1} /> },
  { label: "אשקלון אזורים ס...", icon: <Swatch fill="#b5b5b5" stroke="#151515" w={3} />, active: true },
];

function Legend() {
  return (
    <ul className="absolute left-[11px] top-[11px] w-[171px]">
      {LEGEND.map(({ label, icon, active }) => (
        <li
          key={label}
          className={
            active
              ? "flex h-[35px] items-center border border-r-[3px] border-[#f09c0c] bg-white pl-[5px] pr-[4px]"
              : "flex h-[35px] items-center border-b-2 border-l border-r-2 border-[#f0f0ee] bg-white pl-[5px] pr-[5px]"
          }
        >
          <svg width="7" height="12" viewBox="0 0 7 12" fill="none" stroke="#666" strokeWidth="1.100" className="mb-1 shrink-0">
            <path d="M6 1 1 6l5 5" />
          </svg>
          <span dir="rtl" className="min-w-0 flex-1 whitespace-nowrap text-[13.700px] leading-5 text-[#222]">
            {label}
          </span>
          <span className="ml-[11px] flex w-[24px] shrink-0 justify-center">{icon}</span>
        </li>
      ))}
    </ul>
  );
}

function MapPanel() {
  return (
    <section className="h-[800px] w-[723px] border-4 border-[#49aef0] bg-white">
      <div className="relative z-10 flex h-[40px] items-center border-b border-[#dcdcdc] pl-3 shadow-[0_2px_5px_rgba(0,0,0,0.1)]">
        <div className="flex items-center pb-0.5">
          <ExitIcon />
          <div className="ml-[13px] h-[26px] w-px bg-[#e0e0e0]" />
        </div>
        <div className="ml-auto flex h-full items-center">
          <span className="flex w-10 justify-center pb-0.5 pl-0.5"><ZoomIcon /></span>
          <span className="flex w-10 justify-center pb-0.5"><SelectIcon /></span>
          <span className="flex h-full w-10 items-center justify-center bg-[#e2f1fa] pb-0.5"><ListIcon /></span>
        </div>
        <svg width="34" height="17" viewBox="0 0 34 17" className="absolute left-[341px] top-[31px]">
          <path d="M0 9Q6 8 9 4Q16-3 24 4Q28 8 34 9Q28 16 17 16Q6 16 0 9Z" fill="#ececec" />
          <path d="M13 11l4-4 4 4" fill="none" stroke="#555" strokeWidth="1.700" />
        </svg>
      </div>
      <div className="relative">
        <ShelterMap />
        <Legend />
        <div className="absolute right-[11px] top-[11px] flex size-[35px] items-center justify-center bg-white pb-0.5 shadow-[0_1px_2px_rgba(0,0,0,0.25)]">
          <HomeIcon />
        </div>
      </div>
    </section>
  );
}

/* ------------------------------------------------------------------ */
/* Page                                                                */
/* ------------------------------------------------------------------ */

export default function App() {
  return (
    <div className="relative h-[898px] w-[1774px] overflow-hidden bg-white [font-family:Lato,'Open_Sans','Noto_Sans',sans-serif]">
      <header className="flex h-[65px] w-[1773px] items-center justify-end gap-[11px] bg-[#ffbe2f] pb-[2px] pr-5">
        <h1 dir="rtl" className="pt-px text-[16.600px] leading-6 text-white">מוגנות בראי החברה</h1>
        <DashboardLogo />
      </header>

      <main className="flex pl-5 pt-[7px]">
        <div className="flex h-[840px] w-[448px] shrink-0 flex-col border-4 border-[#fdba04]">
          <section className="h-[352px] border-b-4 border-[#fdba04]">
            <PanelHeader title="מספר תושבים במרחק 100 מטר ממקלט" />
            <Gauge value={12909} label="12,909" />
          </section>
          <section className="h-[363px] border-b-4 border-[#fdba04]">
            <PanelHeader title="מספר תושבים במרחק 50 מטר ממקלט" />
            <Gauge value={6521} label="6,521" />
          </section>
          <section>
            <PanelHeader title="תושבים בעלי מוגבלות במרחק 50 מטר ממקלט" />
          </section>
        </div>

        <div className="ml-[3px] flex w-[1295px] shrink-0 flex-col gap-[3px]">
          <div className="flex items-start gap-[3px]">
            <div className="grid shrink-0 auto-rows-[140px] grid-cols-[283px_283px] gap-[3px]">
              {CARDS.map((card) => <StatCard key={card.title} card={card} />)}
            </div>
            <MapPanel />
          </div>
          <section className="flex h-[60px] w-[877px] justify-end self-end border-4 border-[#fdba04] pr-[69px] pt-[18px]">
            <div className="h-px w-[65px] bg-[#ececec]" />
          </section>
        </div>
      </main>

      <div className="absolute right-0 top-[117px] h-[44px] w-px bg-[linear-gradient(#a5dcdf_0_36px,#2b7f95_36px_40px,#2c3e4a_40px)]" />
    </div>
  );
}
